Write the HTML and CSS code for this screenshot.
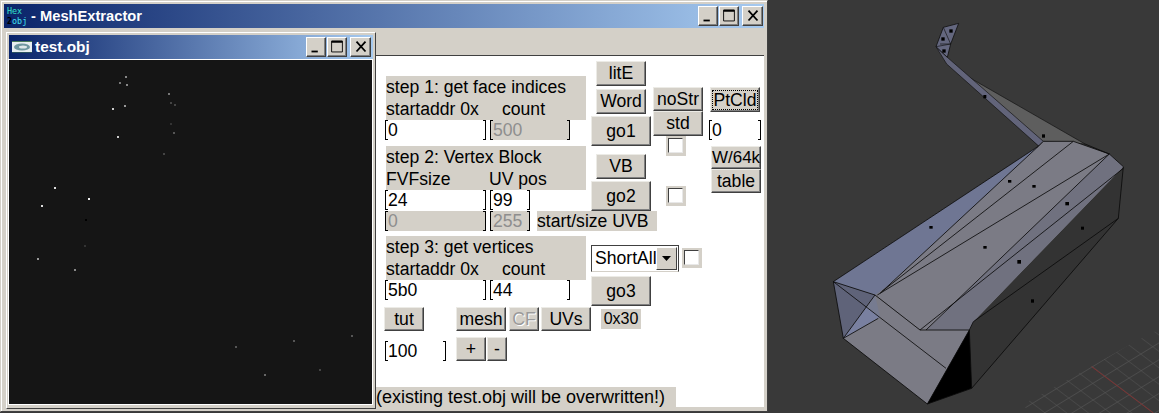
FILE: index.html
```html
<!DOCTYPE html>
<html lang="en">
<head>
<meta charset="utf-8">
<title>MeshExtractor</title>
<link rel="stylesheet" href="styles.css">
</head>
<body>
<div class="desktop">
  <div class="window">
    <div class="titlebar main-title">
      <div class="app-icon"><span class="hex">Hex</span><span class="obj"><b>2</b>obj</span></div>
      <span class="title-text">- MeshExtractor</span>
      <div class="caption-buttons">
        <div class="cap"><svg viewBox="0 0 20 20" class="cap-ico"><rect x="5" y="14" width="7" height="2"/></svg></div>
        <div class="cap"><svg viewBox="0 0 20 20" class="cap-ico"><path d="M4 3.5h12v12H4zM4 4.5h12" fill="none" stroke="#000" stroke-width="1"/><rect x="4" y="3" width="12" height="2"/></svg></div>
        <div class="cap close"><svg viewBox="0 0 20 20" class="cap-ico"><path d="M5 4l10 11M15 4L5 15" stroke="#000" stroke-width="2" fill="none"/></svg></div>
      </div>
    </div>
    <div class="frame-body">
      <div class="mdi">
        <div class="child">
          <div class="titlebar child-title">
            <svg class="doc-icon" viewBox="0 0 20 12"><rect width="20" height="12" fill="#e8eef0"/><rect width="20" height="1" fill="#4a7a5a"/><rect y="11" width="20" height="1" fill="#2a5060"/><ellipse cx="10" cy="6" rx="8" ry="3.6" fill="#6f97a0"/><ellipse cx="11" cy="6" rx="4" ry="1.5" fill="#dfe8ea"/></svg>
            <span class="title-text">test.obj</span>
            <div class="caption-buttons">
              <div class="cap"><svg viewBox="0 0 20 20" class="cap-ico"><rect x="5" y="14" width="7" height="2"/></svg></div>
              <div class="cap"><svg viewBox="0 0 20 20" class="cap-ico"><path d="M4 3.5h12v12H4zM4 4.5h12" fill="none" stroke="#000" stroke-width="1"/><rect x="4" y="3" width="12" height="2"/></svg></div>
              <div class="cap close"><svg viewBox="0 0 20 20" class="cap-ico"><path d="M5 4l10 11M15 4L5 15" stroke="#000" stroke-width="2" fill="none"/></svg></div>
            </div>
          </div>
          <svg class="points" viewBox="9 60 363 344" shape-rendering="crispEdges">
            <g>
              <rect x="125" y="76" width="2" height="2" fill="#888"/>
              <rect x="119" y="82" width="2" height="2" fill="#777"/>
              <rect x="126" y="84" width="2" height="2" fill="#888"/>
              <rect x="168" y="93" width="2" height="2" fill="#777"/>
              <rect x="170" y="102" width="2" height="2" fill="#444"/>
              <rect x="174" y="104" width="2" height="2" fill="#444"/>
              <rect x="124" y="105" width="2" height="2" fill="#999"/>
              <rect x="112" y="108" width="2" height="2" fill="#ccc"/>
              <rect x="170" y="123" width="2" height="2" fill="#333"/>
              <rect x="173" y="132" width="2" height="2" fill="#555"/>
              <rect x="117" y="136" width="2" height="2" fill="#ccc"/>
              <rect x="163" y="153" width="2" height="2" fill="#444"/>
              <rect x="54" y="187" width="2" height="2" fill="#ddd"/>
              <rect x="88" y="198" width="2" height="2" fill="#eee"/>
              <rect x="41" y="205" width="2" height="2" fill="#ddd"/>
              <rect x="85" y="219" width="2" height="2" fill="#000"/>
              <rect x="84" y="245" width="2" height="2" fill="#333"/>
              <rect x="37" y="258" width="2" height="2" fill="#999"/>
              <rect x="74" y="269" width="2" height="2" fill="#888"/>
              <rect x="351" y="335" width="2" height="2" fill="#555"/>
              <rect x="293" y="340" width="2" height="2" fill="#555"/>
              <rect x="235" y="346" width="2" height="2" fill="#555"/>
              <rect x="319" y="369" width="2" height="2" fill="#444"/>
              <rect x="264" y="374" width="2" height="2" fill="#666"/>
            </g>
          </svg>
        </div>
      </div>
      <div class="right-col">
        <div class="menu-strip"></div>
        <div class="client">
          <div class="upper">
            <div class="col-steps">
              <div class="label-block">
                <div>step 1: get face indices</div>
                <div class="label-row"><span class="w116">startaddr 0x</span><span>count</span></div>
              </div>
              <div class="field-row">
                <div class="field w101">0</div>
                <div class="field w80 off">500</div>
              </div>
              <div class="label-block gap6">
                <div>step 2: Vertex Block</div>
                <div class="label-row"><span class="w103">FVFsize</span><span>UV pos</span></div>
              </div>
              <div class="field-row">
                <div class="field w101">24</div>
                <div class="field w40">99</div>
              </div>
              <div class="field-row gap1">
                <div class="field w101 off">0</div>
                <div class="field w40 off">255</div>
                <div class="tag uvb">start/size UVB</div>
              </div>
              <div class="label-block gap5">
                <div>step 3: get vertices</div>
                <div class="label-row"><span class="w116">startaddr 0x</span><span>count</span></div>
              </div>
              <div class="field-row">
                <div class="field w101">5b0</div>
                <div class="field w80">44</div>
              </div>
            </div>
            <div class="col-mid">
              <div class="mid-top">
                <div class="col-go">
                  <div class="btn small lite">litE</div>
                  <div class="btn small word">Word</div>
                  <div class="btn big go1">go1</div>
                  <div class="btn small vb">VB</div>
                  <div class="btn big go2">go2</div>
                </div>
                <div class="col-str">
                  <div class="btn small nostr">noStr</div>
                  <div class="btn small std">std</div>
                  <div class="check chk1"><i></i></div>
                  <div class="check chk2"><i></i></div>
                </div>
              </div>
              <div class="select-row">
                <div class="combo"><span class="combo-text">ShortAll</span><div class="combo-btn"><svg viewBox="0 0 9 5" class="arrow"><path d="M0 0h9L4.500 5z"/></svg></div></div>
                <div class="check chk3"><i></i></div>
              </div>
              <div class="btn big go3">go3</div>
            </div>
            <div class="col-right">
              <div class="btn small ptcld"><span class="focus">PtCld</span></div>
              <div class="field w51 pt0">0</div>
              <div class="btn small w64">W/64k</div>
              <div class="btn small tbl">table</div>
            </div>
          </div>
          <div class="tool-row">
            <div class="btn tut">tut</div>
            <div class="btn mesh">mesh</div>
            <div class="btn cf">CF</div>
            <div class="btn uvs">UVs</div>
            <div class="tag hex30">0x30</div>
          </div>
          <div class="zoom-row">
            <div class="field w60">100</div>
            <div class="btn plus">+</div>
            <div class="btn minus">-</div>
          </div>
          <div class="tag warning">(existing test.obj will be overwritten!)</div>
        </div>
      </div>
    </div>
  </div>
  <div class="viewport">
    <svg class="scene" viewBox="-6 0 1173 1239">
      <defs>
        <pattern id="grid" width="10" height="10" patternUnits="userSpaceOnUse" patternTransform="matrix(3.7 2.8 3.6 -2.200 965 1100)">
          <path d="M0 0H10M0 0V10" fill="none" stroke="#555" stroke-width="0.8"/>
        </pattern>
      </defs>
      <polygon points="755,1215 1150,995 1173,995 1173,1239 790,1239" fill="url(#grid)"/>
      <path d="M965 1100L1150 1239" stroke="#8a2f2f" stroke-width="2.500" fill="none"/>
      <polygon points="590,228 945,432 820,424 806,438" fill="#5e5e5e" stroke="#111" stroke-width="2"/>
      <polygon points="498,140 532,172 820,424 806,438 530,192" fill="#62647a" stroke="#111" stroke-width="2"/>
      <polygon points="520,82 566,70 542,132 532,172 498,140" fill="#64677f" stroke="#111" stroke-width="2.500"/>
      <path d="M520 82L542 132L498 140M542 132L510 132" stroke="#111" stroke-width="2" fill="none"/>
      <polygon points="1060,500 1045,655 605,1165 598,990 610,965" fill="#333"/>
      <polygon points="190,845 806,438 820,424 910,424 1018,462 1060,500 610,965 598,990 450,990 315,885" fill="#7b7b85"/>
      <polygon points="1060,500 610,965 598,990 470,990 1018,462" fill="#70717f"/>
      <polygon points="190,845 806,438 350,860 315,885" fill="#6f7693"/>
      <polygon points="190,845 315,885 290,920 220,1015" fill="#5f6379"/>
      <polygon points="220,1015 290,920 315,885 450,990 598,990 472,1212" fill="#7b7b85"/>
      <polygon points="220,1015 290,920 330,950" fill="#7980a0"/>
      <polygon points="290,920 315,885 330,950" fill="#767b90"/>
      <polygon points="598,990 472,1212 605,1165" fill="#000"/>
      <path d="M190 845L806 438M820 424H910L1018 462L1060 500L1045 655L605 1165L472 1212L220 1015L190 845L315 885L450 990H598L472 1212M806 438L820 424M806 438L330 880M910 424L335 875M1018 462L322 885M1060 505L450 990M1018 462L468 990M945 432L1018 462M190 845L528 1105M220 1015L315 885M220 1015L325 955M598 990L605 1165M610 965L1045 655M598 990L610 965" fill="none" stroke="#0a0a0a" stroke-width="2.500"/>
      <g fill="#000">
        <rect x="478" y="678" width="10" height="8"/>
        <rect x="714" y="540" width="10" height="8"/>
        <rect x="787" y="555" width="10" height="8"/>
        <rect x="886" y="606" width="11" height="10"/>
        <rect x="933" y="680" width="9" height="9"/>
        <rect x="640" y="738" width="10" height="8"/>
        <rect x="742" y="780" width="11" height="11"/>
        <rect x="783" y="898" width="9" height="10"/>
        <rect x="816" y="403" width="9" height="10"/>
        <rect x="640" y="285" width="9" height="10"/>
        <rect x="538" y="88" width="10" height="10"/>
        <rect x="514" y="112" width="10" height="10"/>
        <rect x="517" y="148" width="10" height="10"/>
      </g>
    </svg>
  </div>
</div>
</body>
</html>
```

FILE: styles.css
```css
* { box-sizing: border-box; }

html, body {
  margin: 0;
  padding: 0;
  width: 1159px;
  height: 413px;
  overflow: hidden;
  background: #393939;
}

.desktop {
  display: flex;
  width: 1159px;
  height: 413px;
  font-family: "Liberation Sans", Arial, sans-serif;
  font-size: 17.6px;
  color: #000;
}

/* main window */
.window {
  flex: 0 0 768px;
  min-width: 0;
  height: 412px;
  padding: 3px 3px 3px 3px;
  background: #d4d0c8;
  border-top: 1px solid #d4d0c8;
  border-left: 1px solid #d4d0c8;
  border-right: 1px solid #404040;
  border-bottom: 1px solid #404040;
  box-shadow: inset 1px 1px 0 #fff;
  display: flex;
  flex-direction: column;
}

.titlebar {
  display: flex;
  align-items: center;
  height: 24px;
  color: #fff;
  font-weight: bold;
  font-size: 14.7px;
  background: linear-gradient(90deg, #0a246a, #a6caf0);
}

.main-title { flex: 0 0 24px; padding-left: 3px; padding-right: 1px; }
.child-title { flex: 0 0 24px; padding-left: 3px; padding-right: 2px; }

.title-text { white-space: nowrap; }
.main-title .title-text { margin-left: 3px; }
.child-title .title-text { margin-left: 3px; font-size: 15.4px; }

.app-icon {
  width: 21px;
  height: 21px;
  flex: none;
  display: flex;
  flex-direction: column;
  font-family: "DejaVu Sans Mono", monospace;
  font-weight: normal;
  font-size: 8.400px;
  line-height: 10px;
  color: #34e0c8;
}
.app-icon .obj { color: #40e0f0; }
.app-icon b { color: #000; }

.doc-icon { width: 20px; height: 12px; flex: none; }

.caption-buttons {
  margin-left: auto;
  display: flex;
  gap: 1px;
}
.cap {
  width: 20px;
  height: 20px;
  background: #d4d0c8;
  border: 1px solid;
  border-color: #fff #404040 #404040 #fff;
  box-shadow: inset -1px -1px 0 #808080;
  display: flex;
  align-items: center;
  justify-content: center;
}
.cap.close { margin-left: 2px; width: 21px; }
.cap-ico { width: 18px; height: 18px; flex: none; }

.frame-body {
  flex: 1;
  display: flex;
  min-height: 0;
  min-width: 0;
}

/* MDI area with the child window */
.mdi {
  flex: 0 0 372px;
  padding: 4px 0 0 2px;
}
.child {
  width: 370px;
  height: 377px;
  background: #d4d0c8;
  border: 1px solid;
  border-color: #fff #404040 #404040 #fff;
  padding: 2px;
  display: flex;
  flex-direction: column;
}
.points {
  display: block;
  margin-top: 1px;
  width: 363px;
  height: 344px;
  flex: none;
  background: #151515;
  outline: 1px solid #fff;
}

.right-col {
  flex: 1;
  display: flex;
  flex-direction: column;
  min-width: 0;
}
.menu-strip { flex: 0 0 27px; }

/* client area */
.client {
  flex: 0 0 352px;
  background: #fff;
  border-top: 1px solid #404040;
  display: flex;
  flex-direction: column;
}

.upper { display: flex; height: 251px; }

.col-steps {
  flex: 0 0 215px;
  min-width: 0;
  padding: 20px 0 0 9px;
}

.label-block {
  margin-left: 1px;
  width: 200px;
  height: 44px;
  background: #d4d0c8;
  line-height: 22px;
  white-space: nowrap;
}
.gap6 { margin-top: 6px; }
.gap5 { margin-top: 5px; }
.gap1 { margin-top: 1px; }

.label-row { display: flex; }
.w116 { width: 116px; }
.w103 { width: 103px; }

.field-row {
  display: flex;
  gap: 4px;
  height: 20px;
  white-space: nowrap;
}

.field {
  height: 20px;
  line-height: 20px;
  padding-left: 2px;
  flex: none;
  border-left: 1px solid #000;
  border-right: 1px solid #000;
  background-color: #fff;
  background-image:
    linear-gradient(#000, #000), linear-gradient(#000, #000),
    linear-gradient(#000, #000), linear-gradient(#000, #000);
  background-size: 2px 1px;
  background-repeat: no-repeat;
  background-position: 0 0, 0 100%, 100% 0, 100% 100%;
}
.field.off { background-color: #d4d0c8; color: #8e8e8e; }
.w101 { width: 101px; }
.w80 { width: 80px; }
.w40 { width: 40px; }
.w51 { width: 52px; }
.w60 { width: 61px; }

.tag {
  background: #d4d0c8;
  height: 20px;
  line-height: 20px;
  white-space: nowrap;
}
.uvb { width: 120px; margin-left: 3px; flex: none; }

/* buttons */
.btn {
  flex: none;
  background: #d4d0c8;
  border: 1px solid;
  border-color: #ecebe6 #404040 #404040 #ecebe6;
  box-shadow: inset -1px -1px 0 #808080;
  display: flex;
  align-items: center;
  justify-content: center;
  white-space: nowrap;
}
.small { width: 50px; height: 25px; }
.big { width: 60px; height: 30px; }

.col-mid { flex: 0 0 118px; }
.mid-top { display: flex; height: 189px; }

.col-go { flex: 0 0 60px; padding-top: 5px; }
.lite, .word, .vb { margin-left: 5px; }
.word { margin-top: 3px; }
.go1 { margin-top: 2px; }
.vb { margin-top: 8px; }
.go2 { margin-top: 2px; }

.col-str { flex: 0 0 50px; margin-left: 2px; padding-top: 31px; }
.nostr { height: 24px; }

.check {
  width: 20px;
  height: 20px;
  background: #d4d0c8;
  padding: 2px;
  flex: none;
}
.check i {
  display: block;
  width: 15px;
  height: 15px;
  background: #fff;
  border: 1px solid;
  border-color: #404040 #e8e8e8 #e8e8e8 #404040;
}
.chk1 { margin-left: 13px; margin-top: 0; }
.chk2 { margin-left: 13px; margin-top: 30px; }
.chk3 { margin-left: 3px; margin-top: 3px; }

.select-row { display: flex; height: 31px; align-items: flex-start; }
.combo {
  flex: none;
  width: 88px;
  height: 27px;
  display: flex;
  align-items: center;
  background: #fff;
  border: 1px solid;
  border-color: #404040 #404040 #d4d0c8 #404040;
  padding: 1px;
}
.combo-text { flex: 1; padding-left: 2px; min-width: 0; white-space: nowrap; }
.combo-btn {
  flex: none;
  width: 21px;
  height: 23px;
  background: #d4d0c8;
  border: 1px solid;
  border-color: #fff #404040 #404040 #fff;
  display: flex;
  align-items: center;
  justify-content: center;
}
.arrow { width: 9px; height: 5px; }

.col-right { flex: 0 0 54px; min-width: 0; padding-top: 31px; }
.ptcld { margin-left: 1px; }
.focus { outline: 1px dotted #000; padding: 0; line-height: 18px; }
.pt0 { margin-top: 8px; }
.w64 { margin-top: 6px; margin-left: 2px; height: 23px; font-size: 17px; }
.tbl { margin-left: 2px; height: 24px; }

/* lower rows */
.tool-row { display: flex; align-items: flex-start; height: 30px; padding-left: 8px; }
.tut { width: 40px; height: 24px; }
.mesh { width: 50px; height: 24px; margin-left: 32px; }
.cf { width: 30px; height: 24px; margin-left: 3px; color: #9a9a9a; text-shadow: 1px 1px 0 #fff; }
.uvs { width: 50px; height: 24px; margin-left: 2px; }
.hex30 { width: 40px; margin-left: 10px; margin-top: 2px; text-align: center; font-size: 16px; }

.zoom-row { display: flex; align-items: flex-start; height: 24px; padding-left: 9px; }
.zoom-row .field { margin-right: 10px; margin-top: 4px; }
.plus { width: 30px; height: 24px; }
.minus { width: 20px; height: 24px; margin-left: 1px; }

.warning { margin-top: auto; width: 300px; flex: none; font-size: 18px; }

/* right side 3D view */
.viewport { flex: 1; min-width: 0; height: 413px; background: #393939; }
.scene { display: block; width: 391px; height: 413px; }
```
